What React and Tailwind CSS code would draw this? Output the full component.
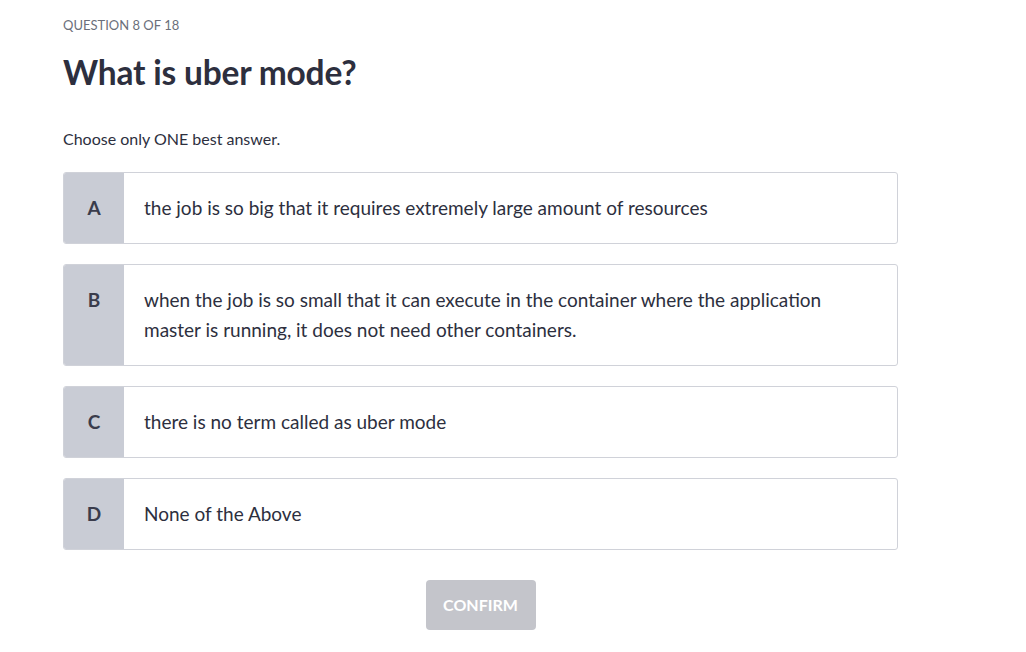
export default function App() {
  const options = [
    { key: "A", text: "the job is so big that it requires extremely large amount of resources" },
    {
      key: "B",
      text: "when the job is so small that it can execute in the container where the application master is running, it does not need other containers.",
    },
    { key: "C", text: "there is no term called as uber mode" },
    { key: "D", text: "None of the Above" },
  ];

  return (
    <div className="min-h-screen bg-white font-['Lato',sans-serif] text-[#2d2f3e]">
      <div className="w-[835px] ml-[63px] pt-[15px]">
        <div className="text-[13px] leading-[20px] text-[#6b6f7b]">
          QUESTION 8 OF 18
        </div>
        <h1 className="mt-[17px] text-[33.5px] leading-[40px] font-bold tracking-[-0.2px]">
          What is uber mode?
        </h1>
        <p className="mt-[35px] text-[16px] leading-[24px]">
          Choose only ONE best answer.
        </p>

        <div className="mt-[21px] flex flex-col gap-[20px]">
          {options.map((opt) => (
            <div
              key={opt.key}
              className="flex rounded-[3px] border border-[#d0d2d9] overflow-hidden"
            >
              <div className="w-[60px] shrink-0 bg-[#c9ccd5] py-[20px] text-center text-[19px] leading-[30px] font-bold text-[#3a3c4c]">
                {opt.key}
              </div>
              <div className="flex-1 py-[20px] pl-[20px] pr-[40px] text-[19px] leading-[30px]">
                {opt.text}
              </div>
            </div>
          ))}
        </div>

        <div className="mt-[30px] flex justify-center">
          <button className="w-[110px] h-[50px] rounded-[4px] bg-[#c4c5cb] text-white text-[16px] font-bold">
            CONFIRM
          </button>
        </div>
      </div>
    </div>
  );
}
